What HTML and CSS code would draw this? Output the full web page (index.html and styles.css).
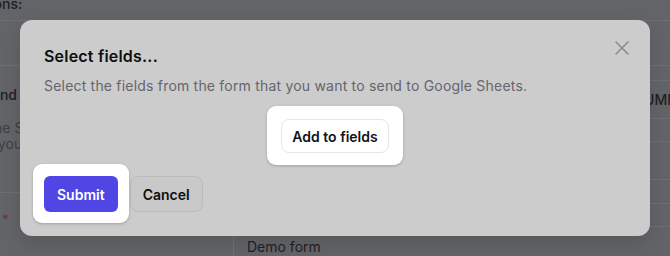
FILE: index.html
```html
<!DOCTYPE html>
<html lang="en">
<head>
<meta charset="utf-8">
<title>Select fields</title>
<link rel="stylesheet" href="styles.css">
</head>
<body>
<div class="page">
  <div class="row row-top"><span class="top-text">Conditions:</span></div>
  <div class="row row-second"></div>
  <div class="cols">
    <div class="left">
      <div class="l-head">and sheet</div>
      <div class="l-desc l1">The Spreadsheet where the data will be sent</div>
      <div class="l-desc l2">your Google account.</div>
      <div class="l-sep"></div>
      <div class="l-star">*</div>
    </div>
    <div class="right">
      <div class="r-row r-a"></div>
      <div class="r-row r-b"><span class="r-label">COLUMN:</span></div>
      <div class="r-row r-c"></div>
      <div class="r-row r-d"></div>
      <div class="r-row r-e"></div>
      <div class="r-row r-f"></div>
      <div class="r-last"><span class="r-val">Demo form</span></div>
    </div>
  </div>
</div>

<div class="dialog">
  <button class="close" aria-label="Close">
    <svg width="14" height="14" viewBox="0 0 14 14"><path d="M1 1L13 13M13 1L1 13" stroke="#8a8a91" stroke-width="1.5" fill="none" stroke-linecap="round"/></svg>
  </button>
  <h2 class="title">Select fields...</h2>
  <p class="subtitle">Select the fields from the form that you want to send to Google Sheets.</p>
  <div class="add-row">
    <div class="spot spot-add"><button class="btn btn-add">Add to fields</button></div>
  </div>
  <div class="footer">
    <div class="spot spot-submit"><button class="btn btn-submit">Submit</button></div>
    <button class="btn btn-cancel">Cancel</button>
  </div>
</div>
</body>
</html>
```

FILE: styles.css
```css
* { box-sizing: border-box; }
html, body { margin: 0; padding: 0; }
body {
  width: 670px;
  height: 256px;
  overflow: hidden;
  background: #626468;
  font-family: Inter, "Noto Sans", sans-serif;
  color: #1d1e22;
  position: relative;
}
.page { width: 670px; height: 256px; overflow: hidden; }
.row { border-bottom: 1px solid #6d6f73; }
.row-top { height: 25px; }
.top-text {
  display: block;
  margin-top: -4px;
  margin-left: -54px;
  font-size: 14px;
  line-height: 16px;
  font-weight: 500;
  color: #1f2024;
}
.row-second { height: 45px; }
.cols { display: flex; }
.left { width: 233px; flex: none; }
.l-head {
  margin-top: 19px;
  margin-left: -8px;
  font-size: 14px;
  line-height: 20px;
  font-weight: 500;
  color: #1f2024;
}
.l-desc {
  font-size: 14px;
  line-height: 16px;
  color: #3d3f44;
  white-space: nowrap;
}
.l1 { margin-top: 15px; margin-left: -15px; }
.l2 { margin-left: -2px; }
.l-sep { margin-top: 40px; border-bottom: 1px solid #6d6f73; }
.l-star {
  margin-top: 20px;
  margin-left: 2px;
  color: #7a3237;
  font-size: 14px;
  line-height: 14px;
}
.right { flex: 1; display: flex; flex-direction: column; }
.r-row { border-bottom: 1px solid #6d6f73; display: flex; justify-content: flex-end; align-items: center; }
.r-a { height: 15px; }
.r-b { height: 38px; }
.r-c { height: 23px; }
.r-d { height: 38px; }
.r-e { height: 24px; }
.r-f { height: 23px; }
.r-label { font-size: 14px; color: #1f2024; margin-right: -12px; font-weight: 500; }
.r-last { border-left: 1px solid #6d6f73; padding: 9px 0 0 13px; height: 30px; }
.r-val { font-size: 14px; line-height: 20px; color: #1f2024; }

.dialog {
  position: absolute;
  left: 20px;
  top: 20px;
  width: 630px;
  padding: 24px;
  background: #cccccc;
  border-radius: 12px;
  box-shadow: 0 8px 20px rgba(0, 0, 0, 0.12);
}
.close {
  position: absolute;
  top: 21px;
  right: 21px;
  width: 14px;
  height: 14px;
  padding: 0;
  border: 0;
  background: none;
  display: block;
}
.close svg { display: block; }
.title {
  margin: 0;
  font-size: 16px;
  line-height: 24px;
  font-weight: 600;
  letter-spacing: 0.2px;
  color: #0e0e11;
}
.subtitle {
  margin: 8px 0 0;
  font-size: 14px;
  line-height: 20px;
  letter-spacing: 0.2px;
  color: #64656e;
}
.add-row { display: flex; justify-content: center; margin-top: 23px; }
.footer { display: flex; gap: 12px; margin-top: 23px; }
.spot { position: relative; z-index: 0; }
.spot::before {
  content: "";
  position: absolute;
  z-index: -1;
  background: #ffffff;
  border-radius: 9px;
  box-shadow: 0 1px 3px rgba(0, 0, 0, 0.22);
}
.spot-add::before { top: -13px; bottom: -12px; left: -14px; right: -14px; }
.spot-submit::before { top: -12px; bottom: -11px; left: -11px; right: -11px; }
.btn {
  font-family: Inter, "Noto Sans", sans-serif;
  font-size: 14px;
  font-weight: 600;
  display: block;
  margin: 0;
  cursor: pointer;
}
.btn-add {
  height: 34px;
  padding: 0 10px;
  background: #ffffff;
  color: #121318;
  border: 1px solid #e6e6e9;
  border-radius: 8px;
}
.btn-submit {
  height: 36px;
  padding: 0 13px;
  background: #4f46e5;
  color: #ffffff;
  border: 0;
  border-radius: 6px;
}
.btn-cancel {
  height: 36px;
  padding: 0 12px;
  background: #c9c9c9;
  color: #0e0e11;
  border: 1px solid #bcbcbe;
  border-radius: 8px;
}
```
